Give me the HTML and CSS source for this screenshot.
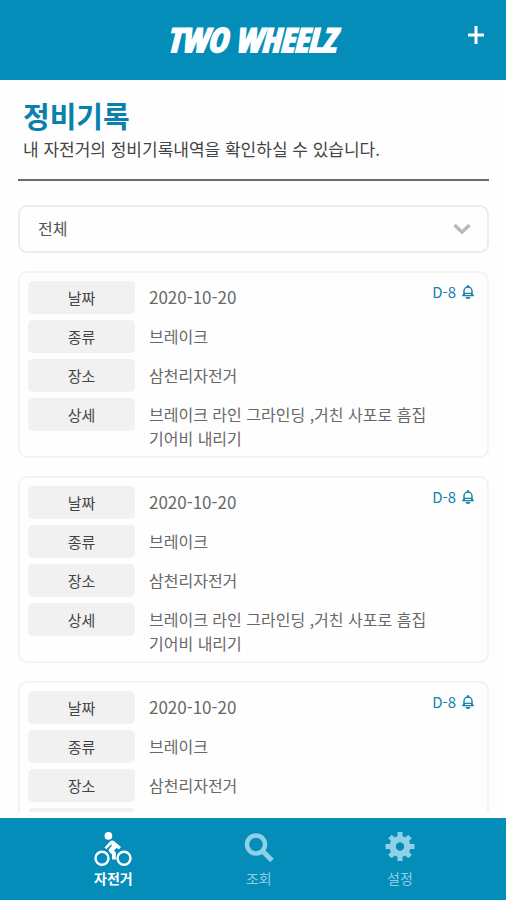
FILE: index.html
```html
<!DOCTYPE html>
<html lang="ko">
<head>
<meta charset="utf-8">
<meta name="viewport" content="width=device-width, initial-scale=1">
<title>정비기록</title>
<link rel="stylesheet" href="styles.css">
</head>
<body>
<svg class="sprite" aria-hidden="true">
  <symbol id="bell" viewBox="0 0 12 14">
    <path d="M2 9.8V6a4 4 0 0 1 8 0V9.8M2 8.4h8M.3 10.6h11.4" fill="none" stroke="currentColor" stroke-width="1.4"/>
    <path d="M0 11 1.5 8.500H3V11zM12 11 10.5 8.500H9V11zM3.500 12h5a2.500 2 0 0 1-5 0zM5 2.500V1a1 1 0 0 1 2 0V2.500z" fill="currentColor"/>
  </symbol>
</svg>
<header class="topbar">
  <span class="logo">TWO WHEELZ</span>
  <button class="add" type="button" aria-label="추가">
    <svg width="16" height="18" viewBox="0 0 16 18"><path d="M8 0v18M0 9h16" stroke="currentColor" stroke-width="3"/></svg>
  </button>
</header>
<main class="content">
  <div class="intro">
    <h1>정비기록</h1>
    <p>내 자전거의 정비기록내역을 확인하실 수 있습니다.</p>
  </div>
  <div class="filter">
    <select aria-label="종류 선택"><option>전체</option></select>
    <svg class="chevron" width="18" height="12" viewBox="0 0 18 12"><path d="M1.5 2 9 9.2 16.5 2" fill="none" stroke="currentColor" stroke-width="3.4"/></svg>
  </div>
  <section class="records">
    <article class="card">
      <dl>
        <dt>날짜</dt><dd class="date">2020-10-20</dd>
        <dt>종류</dt><dd>브레이크</dd>
        <dt>장소</dt><dd>삼천리자전거</dd>
        <dt>상세</dt><dd>브레이크 라인 그라인딩 ,거친 사포로 흠집<br>기어비 내리기</dd>
      </dl>
      <span class="due">D-8 <svg width="12" height="14"><use href="#bell"/></svg></span>
    </article>
    <article class="card">
      <dl>
        <dt>날짜</dt><dd class="date">2020-10-20</dd>
        <dt>종류</dt><dd>브레이크</dd>
        <dt>장소</dt><dd>삼천리자전거</dd>
        <dt>상세</dt><dd>브레이크 라인 그라인딩 ,거친 사포로 흠집<br>기어비 내리기</dd>
      </dl>
      <span class="due">D-8 <svg width="12" height="14"><use href="#bell"/></svg></span>
    </article>
    <article class="card">
      <dl>
        <dt>날짜</dt><dd class="date">2020-10-20</dd>
        <dt>종류</dt><dd>브레이크</dd>
        <dt>장소</dt><dd>삼천리자전거</dd>
        <dt>상세</dt><dd>브레이크 라인 그라인딩 ,거친 사포로 흠집<br>기어비 내리기</dd>
      </dl>
      <span class="due">D-8 <svg width="12" height="14"><use href="#bell"/></svg></span>
    </article>
  </section>
</main>
<nav class="tabs">
  <a class="active" href="#bike">
    <svg width="38" height="36" viewBox="0 0 38 36">
      <g fill="none" stroke="currentColor" stroke-width="2.4">
        <circle cx="8" cy="27.3" r="6.5"/>
        <circle cx="30" cy="27.3" r="6.5"/>
      </g>
      <path d="M10.5 16.5 16.5 10Q18 8.8 20 10L27 16 25 18.2 22.5 17 20 19.5 21.8 21.5V28.5H18V23.5L15 20.5Q14 19 15.500 17.5L18 14.2 17 13.5 12.3 18.3Z" fill="currentColor"/>
      <circle cx="14.4" cy="4.8" r="3.9" fill="currentColor"/>
    </svg>
    <span>자전거</span>
  </a>
  <a href="#search">
    <svg width="30" height="36" viewBox="0 0 30 36"><circle cx="12" cy="13.5" r="9" fill="none" stroke="currentColor" stroke-width="4.4"/><path d="M18 19.5 28 29.5" stroke="currentColor" stroke-width="5"/></svg>
    <span>조회</span>
  </a>
  <a href="#settings">
    <svg width="30" height="36" viewBox="0 0 30 36">
      <g transform="translate(15 15.5)" stroke="currentColor">
        <circle r="7.4" fill="none" stroke-width="6.4"/>
        <path d="M0-14.5V-9M0 14.5V9M-14.5 0H-9M14.5 0H9M-10-10-6.5-6.5M10 10 6.5 6.5M-10 10-6.5 6.5M10-10 6.5-6.5" stroke-width="5"/>
      </g>
    </svg>
    <span>설정</span>
  </a>
</nav>
</body>
</html>
```
FILE: styles.css
```css
* { box-sizing: border-box; }

body {
  margin: 0;
  height: 100vh;
  display: flex;
  flex-direction: column;
  background: #fefefe;
  color: #555;
  font-family: "Noto Sans CJK KR", sans-serif;
  font-size: 16px;
}

.sprite { display: none; }

.topbar {
  flex: none;
  height: 80px;
  display: grid;
  grid-template-columns: 1fr auto 1fr;
  align-items: center;
  padding: 0 22px 0 18px;
  background: #048db9;
  color: #fff;
}

.logo {
  grid-column: 2;
  font: italic bold 33px/40px "Liberation Sans Narrow", "Open Sans Condensed", "DejaVu Sans Condensed", sans-serif;
  -webkit-text-stroke: 2px #fff;
}

.add {
  justify-self: end;
  display: flex;
  align-items: center;
  height: 40px;
  margin-bottom: 10px;
  padding: 0;
  border: 0;
  background: none;
  color: #fff;
}

.content {
  flex: 1;
  min-height: 0;
  margin-bottom: 6px;
  padding: 0 17px 0 18px;
  overflow-y: auto;
  scrollbar-width: none;
}

.intro {
  padding: 15px 5px 16px;
  border-bottom: 2px solid #6b6b6b;
}

.intro h1 {
  margin: 0;
  color: #0881ad;
  font-size: 29px;
  font-weight: 700;
  line-height: 40px;
}

.intro p {
  margin: 0;
  color: #444;
  font-size: 17px;
  line-height: 28px;
}

.filter {
  position: relative;
  margin: 24px 0 18px;
}

.filter select {
  display: block;
  width: 100%;
  height: 48px;
  padding: 0 18px 2px;
  border: 2px solid #ececec;
  border-radius: 9px;
  appearance: none;
  background: #fefefe;
  color: #555;
  font: inherit;
}

.chevron {
  position: absolute;
  top: 18px;
  right: 18px;
  color: #b9b9b9;
  pointer-events: none;
}

.records {
  display: flex;
  flex-direction: column;
  gap: 18px;
}

.card {
  position: relative;
  padding: 8px 8px 6px;
  border: 2px solid #f3f3f3;
  border-radius: 9px;
}

.card dl {
  display: grid;
  grid-template-columns: 107px 1fr;
  align-items: start;
  gap: 6px 14px;
  margin: 0;
}

.card dt {
  border-radius: 5px;
  background: #f1f1f1;
  color: #444;
  font-size: 15px;
  line-height: 33px;
  text-align: center;
}

.card dd {
  margin: 0;
  padding-top: 4px;
  color: #686868;
  line-height: 24px;
}

.card .date { font-size: 17px; }

.due {
  position: absolute;
  top: 8px;
  right: 13px;
  display: flex;
  align-items: center;
  gap: 6px;
  color: #1581ab;
  font-size: 15px;
  line-height: 22px;
}

.tabs {
  flex: none;
  height: 82px;
  display: flex;
  justify-content: space-between;
  padding: 13px 18% 0 calc(18% + 3px);
  background: #048db9;
}

.tabs a {
  display: flex;
  flex-direction: column;
  align-items: center;
  color: #8fd0e6;
  font-size: 14px;
  line-height: 22px;
  text-decoration: none;
}

.tabs .active {
  color: #fff;
  font-weight: 700;
}
```
